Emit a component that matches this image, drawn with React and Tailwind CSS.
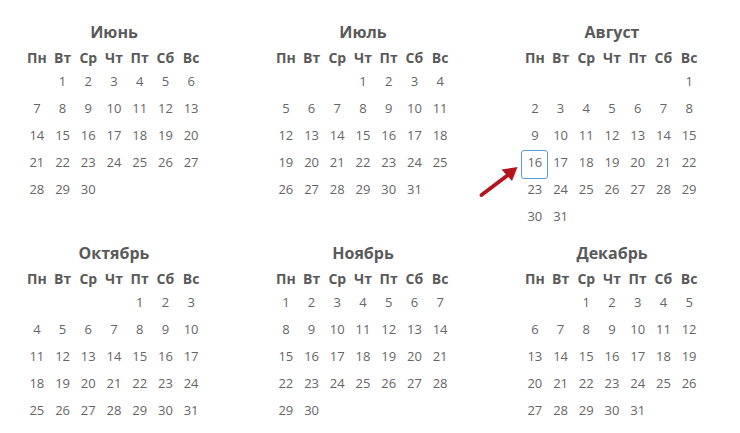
import React from "react";

const DAYS = ["Пн", "Вт", "Ср", "Чт", "Пт", "Сб", "Вс"];

const MONTHS = [
  { name: "Июнь", offset: 1, days: 30 },
  { name: "Июль", offset: 3, days: 31 },
  { name: "Август", offset: 6, days: 31, highlight: 16 },
  { name: "Октябрь", offset: 4, days: 31 },
  { name: "Ноябрь", offset: 0, days: 30 },
  { name: "Декабрь", offset: 2, days: 31 },
];

function Month({ name, offset, days, highlight }) {
  const cells = [];
  for (let i = 0; i < offset; i++) cells.push(null);
  for (let d = 1; d <= days; d++) cells.push(d);
  return (
    <div className="w-[180px]">
      <div className="text-center text-[16px] font-bold leading-[26px] text-[#5a5a5a]">{name}</div>
      <div className="mt-[2px] grid grid-cols-7">
        {DAYS.map((d) => (
          <div key={d} className="h-[21px] text-center text-[14px] font-bold leading-[21px] text-[#5a5a5a]">
            {d}
          </div>
        ))}
      </div>
      <div className="grid grid-cols-7">
        {cells.map((d, i) => (
          <div key={i} className="relative h-[27px] text-center text-[13px] leading-[27px] text-[#666666]">
            {d === highlight && d ? (
              <span className="absolute left-[-1px] top-[1px] h-[29px] w-[27px] rounded-[3px] border border-[#5b9bd5]" />
            ) : null}
            {d ?? ""}
          </div>
        ))}
      </div>
    </div>
  );
}

export default function App() {
  return (
    <div
      className="relative h-[433px] w-[740px] overflow-hidden bg-white pl-[24px] pt-[19px]"
      style={{ fontFamily: '"Open Sans", "Liberation Sans", sans-serif' }}
    >
      <div className="grid grid-cols-[repeat(3,249px)] gap-y-[10px]">
        {MONTHS.map((m) => (
          <Month key={m.name} {...m} />
        ))}
      </div>
      <svg className="absolute left-0 top-0" width="740" height="433" viewBox="0 0 740 433">
        <line x1="481.5" y1="195" x2="508" y2="175" stroke="#b3141b" strokeWidth="3.8" strokeLinecap="round" />
        <polygon points="517.5,167 501.5,169.5 512,181" fill="#b3141b" />
      </svg>
    </div>
  );
}
